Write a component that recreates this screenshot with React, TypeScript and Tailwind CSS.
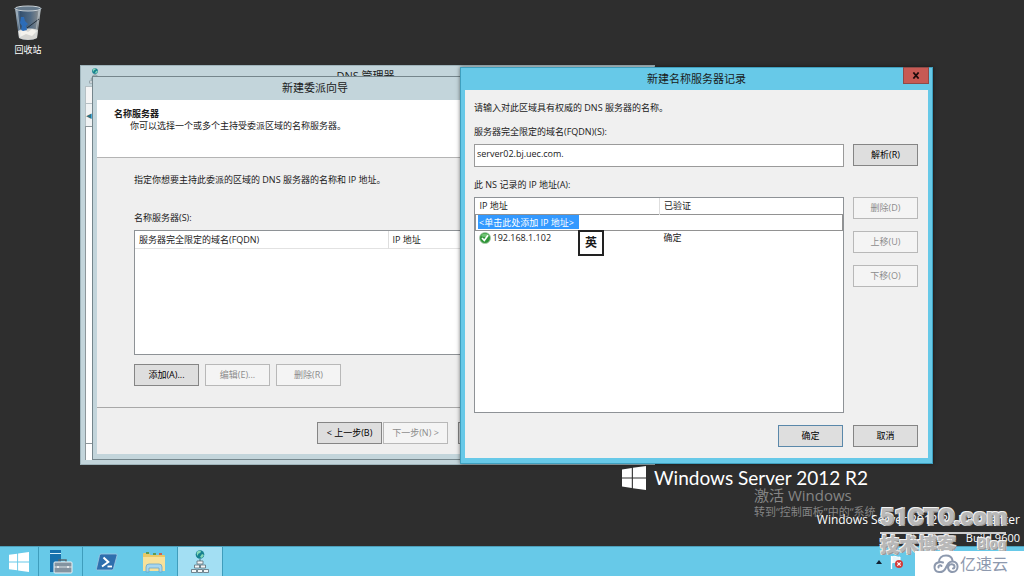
import React, { useState } from 'react';

const buttonBase = 'h-[22px] w-[65px] border text-center text-[9px] leading-3 whitespace-pre';

function DialogButton({ children, disabled, primary }: { children: React.ReactNode; disabled?: boolean; primary?: boolean }) {
  if (disabled) {
    return (
      <button type="button" disabled className={`${buttonBase} border-[#b8b8b8] bg-[#f4f4f4] text-[#8c8c8c]`}>
        {children}
      </button>
    );
  }
  return (
    <button
      type="button"
      className={`${buttonBase} bg-[#dedede] text-black hover:bg-[#e8f2f8] ${primary ? 'border-[#5a88aa]' : 'border-[#858585]'}`}
    >
      {children}
    </button>
  );
}

function WindowsLogo({ className }: { className?: string }) {
  return (
    <svg viewBox="0 0 24 24" className={className} fill="#fff">
      <path d="M0 3.4 9.8 2v9.5H0zM10.9 1.8 24 0v11.5H10.9zM0 12.6h9.8V22L0 20.6zM10.9 12.6H24V24l-13.1-1.8z" />
    </svg>
  );
}

function RecycleBin() {
  return (
    <svg viewBox="0 0 28 36" className="h-9 w-7">
      <defs>
        <linearGradient id="bin" x1="0" x2="1">
          <stop offset="0" stopColor="#b8c6d0" />
          <stop offset=".2" stopColor="#34506e" />
          <stop offset=".6" stopColor="#506a84" />
          <stop offset=".85" stopColor="#7b848b" />
          <stop offset="1" stopColor="#c3cbd0" />
        </linearGradient>
      </defs>
      <path d="M1 3h26l-4 30c-4 2.500-14 2.500-18 0z" fill="url(#bin)" />
      <path d="M4 26c5-3 14-3 20-1l-1 8c-4 2.500-14 2.500-18 0z" fill="#d5d5d2" />
      <path d="m5 27 4-3 5 3 4-3 5 2-5 5-6-2-6 3z" fill="#f4f2ed" />
      <path d="m7 12 3 0 1 4 3 3-2 2 1 4-4 1-2-1 1-4-2-3z" fill="#2c6cb8" />
      <path d="m13 23 12-9" stroke="#222f3c" strokeWidth="1" />
      <path d="m3 6 4 26M25 6l-4 26" stroke="#dce4e9" strokeWidth=".8" opacity=".5" />
      <ellipse cx="14" cy="3.500" rx="13" ry="2.500" fill="#65798b" stroke="#c9d1d6" strokeWidth="1" />
    </svg>
  );
}

function ServerManagerIcon() {
  return (
    <svg viewBox="0 0 24 26" className="h-[26px] w-6">
      <path d="M1 1h11v3H1zM1 5h11v18H1z" fill="#1771ad" />
      <path d="M1 4h11v1H1z" fill="#d9f0fa" />
      <path d="M10 14v-3h7v3" fill="none" stroke="#576770" strokeWidth="1.500" />
      <rect x="5" y="13" width="18" height="11" rx="1" fill="#8393a0" stroke="#eef5f8" />
      <path d="M5 18h18" stroke="#dbe2e6" />
      <path d="M9 17v2M19 17v2" stroke="#f6f8f9" strokeWidth="1.500" />
    </svg>
  );
}

function PowerShellIcon() {
  return (
    <svg viewBox="0 0 22 18" className="h-[18px] w-[22px]">
      <path d="M5 1h15q1.500 0 1 1.500l-3.500 13q-.4 1.500-2 1.500H1.500Q0 17 .500 15.500L3.500 2.500Q3.800 1 5 1z" fill="#2e6fae" stroke="#a3c6e2" strokeWidth=".8" />
      <path d="m7.500 4.500 4.800 4.500-6.300 4.500" fill="none" stroke="#fff" strokeWidth="2" />
      <path d="M11.500 13.500h4.500" stroke="#fff" strokeWidth="1.800" />
    </svg>
  );
}

function ExplorerIcon() {
  return (
    <svg viewBox="0 0 24 22" className="h-[22px] w-6">
      <path d="M1 3q0-1 1-1h5l1.500 2H22q1 0 1 1v15H1z" fill="#e9c966" />
      <path d="M4 1h3v2H4zM11 2h3v2h-3z" fill="#5d9b55" />
      <path d="M17 2h3v2h-3z" fill="#c9674f" />
      <path d="M1 6h22v14H1z" fill="#f7e19a" />
      <path d="M4 21v-5q0-3 3-3h10q3 0 3 3v5h-3v-4H7v4z" fill="#a7d6ee" stroke="#6ba6c8" strokeWidth=".8" />
    </svg>
  );
}

function DnsIcon({ className }: { className?: string }) {
  return (
    <svg viewBox="0 0 18 24" className={className}>
      <circle cx="9" cy="4.500" r="4.300" fill="#17818f" />
      <path d="M6 2c2-2 4-1 4 0s-3 1-3 3-2-1-1-3zm5 2 2 1-2 3-2-1z" fill="#86d9b7" />
      <path d="M9 9v3" stroke="#52666f" />
      <g fill="#f3f7f8" stroke="#5b6b73" strokeWidth=".8">
        <path d="M6 11h6v3H6zM3.500 15h5v3h-5zM9.500 15h5v3h-5zM.500 19.500h5v3h-5zM6.500 19.500h5v3h-5zM12.500 19.500h5v3h-5z" />
      </g>
    </svg>
  );
}

function CheckIcon() {
  return (
    <svg viewBox="0 0 12 12" className="size-3 shrink-0">
      <circle cx="6" cy="6" r="5.500" fill="#2f9638" stroke="#a9c9aa" strokeWidth=".8" />
      <path d="M2 4a4.500 4.500 0 0 1 8 0Q6 6 2 4z" fill="#72c475" />
      <path d="m3 6 2.300 2.500L9 3.200" fill="none" stroke="#fff" strokeWidth="1.700" />
    </svg>
  );
}

function CloudLogo() {
  return (
    <svg viewBox="0 0 26 20" className="h-5 w-[26px]" fill="none" stroke="#8d99ae" strokeWidth="2" strokeLinecap="round">
      <path d="M6 8C6 4 9 1.500 13 1.500c3.500 0 6 2 6.500 5" />
      <path d="M10 8.500C8 7.500 1.500 8 1.500 13c0 6.500 8.500 6.500 11 1.500 2-4 3-7 7-7 7 0 6.500 10.500 0 10.500-4 0-5-4-4-6 1.500-3 6-2 6 .5 0 1-.5 2-1.500 2" />
      <path d="M8.500 12c-1.500-1.500-3.500 0-3 1.500" />
    </svg>
  );
}

function DnsManagerWindow() {
  return (
    <section className="absolute top-[65px] left-20 flex h-[400px] w-[575px] flex-col border border-[#9fb4bb] bg-[#c3d5db] px-1 pb-1">
      <header className="flex h-5 shrink-0 items-center px-1">
        <DnsIcon className="h-4 w-3" />
        <h2 className="flex-1 pr-4 text-center text-[11px] leading-4">DNS 管理器</h2>
      </header>
      <div className="h-[18px] border border-[#b5c0c4] bg-[#f5f5f5]" />
      <div className="flex h-[22px] items-center border-x border-[#b5c0c4] bg-[#f0f3f4] text-[11px] text-[#2b7486]">◂</div>
      <div className="flex-1 border border-[#8d979b] bg-white" />
      <div className="h-4 border-x border-[#8d979b] bg-white" />
    </section>
  );
}

function DelegationWizard() {
  return (
    <section className="absolute top-[76px] left-[92px] flex h-[384px] w-[446px] flex-col border border-[#75868c] bg-[#c3d5db] px-1 pb-[5px]">
      <h2 className="h-[23px] shrink-0 text-center text-[11px] leading-[22px]">新建委派向导</h2>
      <div className="h-[58px] shrink-0 border-b border-[#b4b4b4] bg-white px-[17px] pt-2 leading-3">
        <h3 className="font-bold">名称服务器</h3>
        <p className="pl-4">你可以选择一个或多个主持受委派区域的名称服务器。</p>
      </div>
      <div className="flex flex-1 flex-col bg-[#efefef] px-[37px] pt-4">
        <p className="leading-3">指定你想要主持此委派的区域的 DNS 服务器的名称和 IP 地址。</p>
        <h3 className="mt-[26px] leading-3">名称服务器(S):</h3>
        <div className="mt-[6px] h-[125px] border border-[#8e9296] bg-white">
          <table className="w-full table-fixed text-left">
            <thead>
              <tr className="h-[17px] border-b border-[#e2e2e2]">
                <th className="w-[253px] border-r border-[#dedede] px-1 font-normal">服务器完全限定的域名(FQDN)</th>
                <th className="px-1 font-normal">IP 地址</th>
              </tr>
            </thead>
          </table>
        </div>
        <div className="mt-[9px] flex gap-[6px]">
          <DialogButton>添加(A)...</DialogButton>
          <DialogButton disabled>编辑(E)...</DialogButton>
          <DialogButton disabled>删除(R)</DialogButton>
        </div>
      </div>
      <footer className="flex h-[47px] shrink-0 justify-end border-t border-[#a8a8a8] bg-[#efefef] px-[10px] pt-[14px]">
        <DialogButton>{'< 上一步(B)'}</DialogButton>
        <div className="mr-[10px] ml-px">
          <DialogButton disabled>{'下一步(N) >'}</DialogButton>
        </div>
        <DialogButton>取消</DialogButton>
      </footer>
    </section>
  );
}

function NameServerDialog() {
  const [fqdn, setFqdn] = useState('server02.bj.uec.com.');
  const [address, setAddress] = useState('<单击此处添加 IP 地址>');

  return (
    <section className="absolute top-[67px] left-[460px] flex h-[397px] w-[473px] flex-col border border-[#3f9fbe] bg-[#67c9e8] px-1 pb-[5px] shadow-[0_0_4px_#0008]">
      <header className="relative h-[22px] shrink-0">
        <h2 className="text-center text-[11px] leading-[22px]">新建名称服务器记录</h2>
        <button
          type="button"
          aria-label="关闭"
          className="absolute -top-px -right-px flex h-[17px] w-[26px] items-center justify-center border border-[#8f4a48] bg-[#c75a54]"
        >
          <svg viewBox="0 0 8 8" className="h-[7px] w-2" stroke="#1d0b0b" strokeWidth="2">
            <path d="M1 .5 7 7.500M7 .5 1 7.500" />
          </svg>
        </button>
      </header>
      <div className="flex flex-1 flex-col bg-[#f0f0f0] pt-3 pr-[10px] pl-[9px]">
        <p className="leading-3">请输入对此区域具有权威的 DNS 服务器的名称。</p>
        <label htmlFor="fqdn" className="mt-3 leading-3">服务器完全限定的域名(FQDN)(S):</label>
        <div className="mt-[6px] flex gap-[9px]">
          <input
            id="fqdn"
            value={fqdn}
            onChange={(e) => setFqdn(e.target.value)}
            className="h-[23px] min-w-0 flex-1 border border-[#9a9a9a] bg-white px-[2px] pb-1"
          />
          <DialogButton>解析(R)</DialogButton>
        </div>
        <h3 className="mt-3 leading-3">此 NS 记录的 IP 地址(A):</h3>
        <div className="mt-[6px] flex gap-[9px]">
          <div className="h-[216px] min-w-0 flex-1 border border-[#8e9296] bg-white">
            <table className="w-full table-fixed border-collapse text-left leading-3">
              <thead>
                <tr className="h-4">
                  <th className="w-[184px] border-r border-[#dedede] px-1 font-normal">IP 地址</th>
                  <th className="px-1 font-normal">已验证</th>
                </tr>
              </thead>
              <tbody>
                <tr className="h-4 border border-[#929292]">
                  <td colSpan={2} className="px-[2px]">
                    <input
                      aria-label="IP 地址"
                      value={address}
                      onChange={(e) => setAddress(e.target.value)}
                      className="block h-[14px] w-[101px] bg-[#3399ff] px-px text-white"
                    />
                  </td>
                </tr>
                <tr className="h-4">
                  <td>
                    <span className="flex items-center gap-[2px] pl-[3px]">
                      <CheckIcon />
                      192.168.1.102
                    </span>
                  </td>
                  <td className="px-1">确定</td>
                </tr>
              </tbody>
            </table>
          </div>
          <div className="flex flex-col gap-3">
            <DialogButton disabled>删除(D)</DialogButton>
            <DialogButton disabled>上移(U)</DialogButton>
            <DialogButton disabled>下移(O)</DialogButton>
          </div>
        </div>
        <footer className="mt-3 flex justify-end gap-[10px]">
          <DialogButton primary>确定</DialogButton>
          <DialogButton>取消</DialogButton>
        </footer>
      </div>
      <div className="absolute top-[162px] left-[117px] flex size-[26px] items-center justify-center border-2 border-[#222] bg-white text-xs font-bold">
        英
      </div>
    </section>
  );
}

function Taskbar() {
  return (
    <nav className="flex h-[30px] items-stretch border-t border-[#4d9fba] bg-[#67c9e8]">
      <button type="button" aria-label="开始" className="flex w-[39px] items-center justify-center border-r border-[#3f9dbc]">
        <WindowsLogo className="size-5" />
      </button>
      <button type="button" aria-label="服务器管理器" className="flex w-11 items-center justify-center border-r border-[#3f9dbc]">
        <ServerManagerIcon />
      </button>
      <button type="button" aria-label="PowerShell" className="flex w-[47px] items-center justify-center">
        <PowerShellIcon />
      </button>
      <button type="button" aria-label="文件资源管理器" className="flex w-[47px] items-center justify-center">
        <ExplorerIcon />
      </button>
      <button type="button" aria-label="DNS 管理器" className="flex w-[46px] items-center justify-center border-x border-[#3f9dbc] bg-[#a3dff3]">
        <DnsIcon className="h-6 w-[18px]" />
      </button>
      <div className="ml-auto flex w-[148px] items-center gap-2">
        <svg viewBox="0 0 6 4" className="h-1 w-[6px]">
          <path d="m3 0 3 4H0z" fill="#123" />
        </svg>
        <svg viewBox="0 0 14 14" className="size-[14px]">
          <path d="M1.500 1v13" stroke="#fff" strokeWidth="1.300" />
          <path d="M2 2c3-2 5 1 8 0v6c-3 1-5-2-8 0z" fill="#e9f6fb" stroke="#fff" />
          <circle cx="9" cy="9" r="4" fill="#d43b38" />
          <path d="m7.300 7.300 3.400 3.400m0-3.400-3.400 3.400" stroke="#fff" strokeWidth="1.200" />
        </svg>
      </div>
    </nav>
  );
}

const emboss = '[text-shadow:-1px_-1px_0_#f4f4f4,1px_1px_0_#999,1px_-1px_0_#ddd,-1px_1px_0_#ddd]';

export default function App() {
  return (
    <div className="relative flex min-h-screen flex-col overflow-hidden bg-[#2e2e2e] font-['Open_Sans','Noto_Sans_CJK_SC',sans-serif] text-[9px] text-[#1a1a1a]">
      <main className="relative flex-1">
        <div className="flex w-14 flex-col items-center gap-px pt-[5px] text-white">
          <RecycleBin />
          <span className="text-[9px] leading-4">回收站</span>
        </div>

        <DnsManagerWindow />
        <DelegationWizard />

        <div className="absolute top-[466px] right-[156px] flex items-center gap-2 text-white">
          <WindowsLogo className="size-6" />
          <h1 className="font-['Lato',sans-serif] text-[19px] leading-6 whitespace-nowrap">Windows Server 2012 R2</h1>
        </div>
        <div className="absolute top-[486px] left-[754px] whitespace-nowrap text-[#858585]">
          <p className="text-[15px] leading-[18px]">激活 Windows</p>
          <p className="text-[11px] leading-4">转到“控制面板”中的“系统</p>
        </div>
        <div className="absolute top-[511px] right-1 text-right text-[12px] leading-[18px] whitespace-nowrap text-white">
          <p>Windows Server 2012 R2 Datacenter</p>
          <p className="text-[11px]">Build 9600</p>
        </div>

        <NameServerDialog />
      </main>

      <Taskbar />

      <div className={`absolute right-[18px] bottom-[18px] w-[126px] font-['Roboto','Noto_Sans_CJK_SC',sans-serif] font-black text-[#b8b8b8] ${emboss}`}>
        <p className="border-b-2 border-[#ccc] text-[24px] leading-[30px] whitespace-nowrap">51CTO.com</p>
        <p className="flex justify-between text-[19px] leading-6 whitespace-nowrap">
          技术博客 <span className="text-[14px] leading-5">Blog</span>
        </p>
      </div>
      <div className="absolute right-0 bottom-0 flex h-[25px] w-[109px] items-center gap-px bg-white pl-[18px] text-[16px] text-[#8d99ae]">
        <CloudLogo />
        亿速云
      </div>
    </div>
  );
}
